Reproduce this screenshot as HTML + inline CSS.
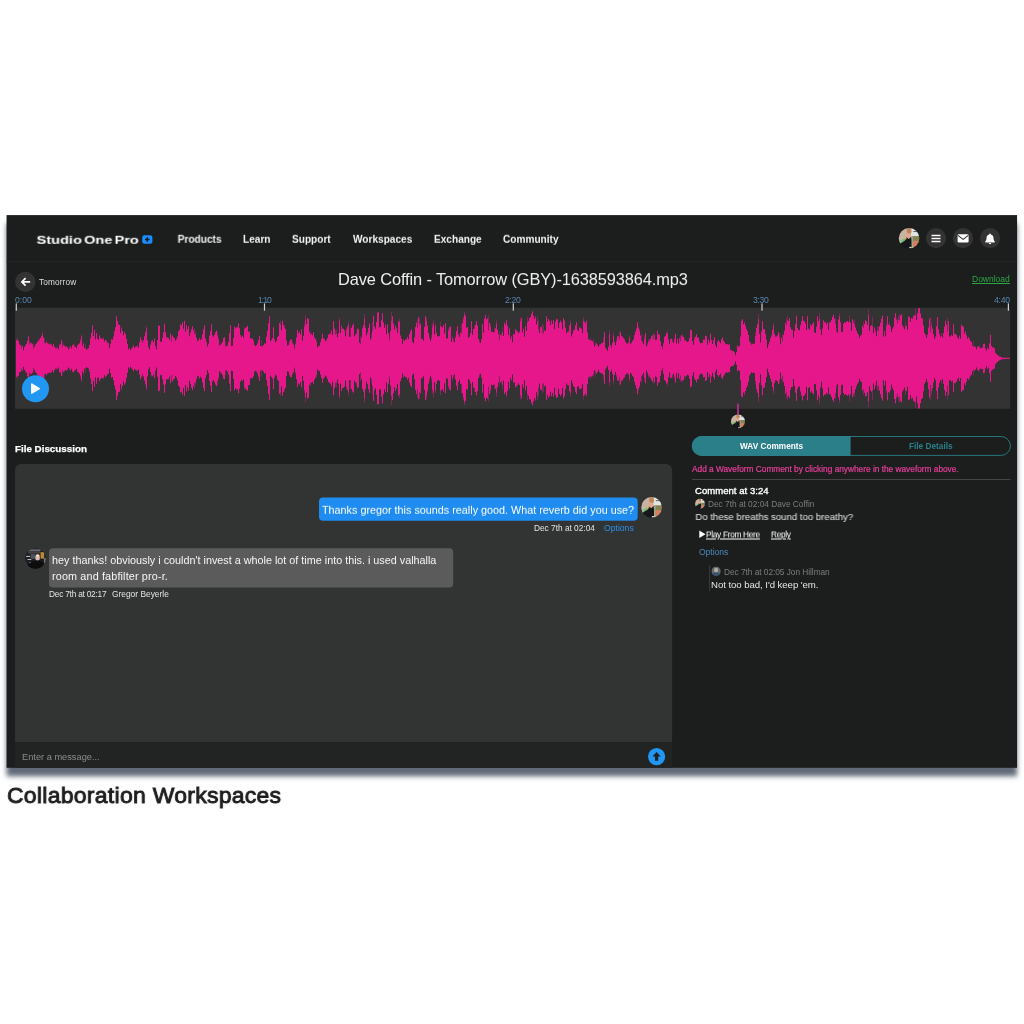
<!DOCTYPE html>
<html lang="en">
<head>
<meta charset="utf-8">
<title>Collaboration Workspaces</title>
<style>
html,body{margin:0;padding:0;background:#fff;}
body{width:1024px;height:1024px;position:relative;overflow:hidden;font-family:"Liberation Sans",sans-serif;}
#bg{position:absolute;left:0;top:0;}
.t{position:absolute;left:0;top:0;will-change:transform;white-space:nowrap;line-height:1;color:#fff;transform-origin:0 0;transform:translate(var(--x),var(--y)) rotate(.01deg);}
.b{font-weight:bold;}
.nav{font-size:10.1px;font-weight:bold;color:#f2f2f2;--y:234.800px;}
.tl{font-size:8.6px;color:#5585ad;--y:296px;}
.meta{font-size:8.3px;color:#7b7b7b;}
.u{text-decoration:underline;}
</style>
</head>
<body>
<svg id="bg" width="1024" height="1024" viewBox="0 0 1024 1024">
<defs>
<filter id="sh" x="-5%" y="-10%" width="110%" height="120%"><feGaussianBlur stdDeviation="2.8"/></filter>
<clipPath id="c1"><circle cx="10.3" cy="10.3" r="10.3"/></clipPath>
<clipPath id="c2"><circle cx="7" cy="7" r="7"/></clipPath>
<filter id="bl" x="-10%" y="-10%" width="120%" height="120%"><feGaussianBlur stdDeviation="0.45"/></filter>
<g id="avA"><g clip-path="url(#c1)"><g filter="url(#bl)"><rect x="-2" y="-2" width="25" height="25" fill="#c9b3a2"/><rect x="12.3" y="-1" width="10" height="10.5" fill="#e0e5e3"/><rect x="14.5" y="3.200" width="7" height=".8" fill="#5a3a2a"/><rect x="13" y="8.200" width="9" height="5.500" fill="#86834f"/><rect x="11.800" y="8.500" width="2.600" height="6.500" fill="#a39a98"/><ellipse cx="16.600" cy="16.200" rx="3" ry="3.600" fill="#d67e5e"/><ellipse cx="10.300" cy="3" rx="2.400" ry="2.900" fill="#c4845a"/><ellipse cx="9.500" cy="8" rx="2.300" ry="2.700" fill="#e2a88e"/><path d="M1 15.500L2.800 11.800 6.200 10.400 6.500 15.500zM10.600 10.300L13.300 11 13.600 18.500 11.200 18.500z" fill="#6ec07c"/><path d="M1 22V16L4 14 6.300 12.600 7.600 9.300 10 11.200 12.200 9 12.700 12.500V22z" fill="#15181a"/><ellipse cx="6.800" cy="10.700" rx="1.200" ry=".8" fill="#cdb84e"/><rect x="10.500" y="19" width="2.200" height="1.400" fill="#ddd"/></g></g></g>
<g id="avG"><g clip-path="url(#c1)"><g filter="url(#bl)"><rect x="-2" y="-2" width="25" height="25" fill="#1f1d24"/><rect x="4" y="1" width="11.500" height="1.800" fill="#67627a"/><rect x="3" y="2.800" width="12" height="2.600" fill="#46403f"/><rect x="5.600" y="5.800" width="4.600" height="4.800" fill="#4a545e"/><rect x="1" y="7.600" width="4" height="1" fill="#c8c8cd"/><rect x="2.300" y="10.700" width="3.800" height="1" fill="#b9b5ba"/><rect x="4.300" y="13.700" width="1.800" height=".8" fill="#99969c"/><rect x="15.400" y="3.800" width="3.600" height="6.500" fill="#b98a34"/><rect x="19" y="9.900" width="1.900" height="5.400" fill="#85858f"/><ellipse cx="12.500" cy="6.700" rx="2.500" ry="1.600" fill="#3e2b26"/><ellipse cx="12.450" cy="9.200" rx="2.250" ry="3.200" fill="#dfbcae"/><ellipse cx="12.450" cy="7.300" rx="1.300" ry=".9" fill="#fff0e8"/><path d="M2 22V17L6.500 13.500 10.500 12.300H14.500L18.500 14.500 20 22z" fill="#0b0b10"/></g></g></g>
<g id="avS"><g transform="scale(.6796)"><use href="#avA"/></g></g>
</defs>
<!-- frame + shadow -->
<rect x="6.55" y="223.6" width="1010.5" height="552.7" fill="#606b78" filter="url(#sh)"/>
<rect x="6.55" y="215.1" width="1010.5" height="552.7" fill="#1c1d1d"/>
<rect x="6.55" y="261.3" width="1010.5" height="1" fill="#272828"/>

<!-- logo plus -->
<rect x="142.2" y="235.2" width="10.2" height="8.6" rx="2.2" fill="#1a8cff"/>
<path d="M147.300 237.200v4.600M145 239.500h4.600" stroke="#1c1d1d" stroke-width="1.600"/>

<!-- nav right icons -->
<use href="#avA" x="898.8" y="227.900"/>
<circle cx="936" cy="238.200" r="10.1" fill="#333"/>
<path d="M931.500 235.400h9M931.500 238.500h9M931.500 241.600h9" stroke="#fff" stroke-width="1.500"/>
<circle cx="963" cy="238.200" r="10.1" fill="#333"/>
<rect x="957.6" y="234.200" width="11" height="8.400" rx="1.300" fill="#fff"/>
<path d="M957.900 235.400l5.200 4 5.200-4" stroke="#333" stroke-width="1.100" fill="none"/>
<circle cx="990" cy="238.200" r="10.1" fill="#333"/>
<path transform="translate(984.5 232.900)" d="M5.500.6c-.5 0-.8.300-.8.800v.3C3 2.100 2 3.500 2 5.200c0 2-.6 2.800-1.300 3.500-.3.300-.1.900.4.900h8.800c.5 0 .7-.6.400-.9C9.600 8 9 7.200 9 5.200 9 3.500 8 2.100 6.300 1.700v-.3c0-.5-.3-.8-.8-.8zM4.300 10.200c0 .7.500 1.200 1.200 1.200s1.200-.5 1.200-1.200z" fill="#fff"/>

<!-- back button -->
<circle cx="25.250" cy="281.900" r="10.200" fill="#333"/>
<path d="M30.200 281.900h-8M25.600 278.200l-3.700 3.700 3.700 3.700" stroke="#fff" stroke-width="1.700" fill="none"/>

<!-- waveform -->
<rect x="15.050" y="307.700" width="995.050" height="101.100" fill="#333"/>
<g transform="translate(15.5 307.750)"><path fill="#e6178a" fill-opacity=".5" d="M1.6,30.3h.8V71.0h-.8zM5.6,37.2h.8V64.1h-.8zM9.6,36.4h.8V64.9h-.8zM13.6,33.3h.8V68.0h-.8zM17.6,35.5h.8V65.8h-.8zM22.6,29.9h.8V71.4h-.8zM26.6,23.5h.8V77.8h-.8zM28.6,30.5h.8V70.8h-.8zM33.6,35.2h.8V66.1h-.8zM40.6,38.7h.8V62.6h-.8zM46.6,33.9h.8V67.4h-.8zM53.6,38.8h.8V62.5h-.8zM58.6,37.0h.8V64.3h-.8zM64.6,31.2h.8V70.1h-.8zM65.6,26.9h.8V74.4h-.8zM67.6,33.7h.8V67.6h-.8zM69.6,36.0h.8V65.3h-.8zM87.6,29.5h.8V71.8h-.8zM105.6,18.3h.8V83.0h-.8zM126.6,33.0h.8V68.3h-.8zM130.6,18.5h.8V82.8h-.8zM135.6,32.2h.8V69.1h-.8zM155.6,28.1h.8V73.2h-.8zM178.6,20.6h.8V80.7h-.8zM179.6,23.6h.8V77.7h-.8zM201.6,23.7h.8V77.6h-.8zM202.6,29.9h.8V71.4h-.8zM204.6,35.2h.8V66.1h-.8zM209.6,34.0h.8V67.3h-.8zM228.6,19.2h.8V82.1h-.8zM245.6,32.6h.8V68.7h-.8zM264.6,12.8h.8V88.5h-.8zM268.6,17.2h.8V84.1h-.8zM276.6,33.8h.8V67.5h-.8zM278.6,39.5h.8V61.8h-.8zM279.6,34.5h.8V66.8h-.8zM288.6,16.0h.8V85.3h-.8zM289.6,6.9h.8V94.4h-.8zM294.6,23.1h.8V78.2h-.8zM300.6,31.3h.8V70.0h-.8zM319.6,22.3h.8V79.0h-.8zM320.6,21.6h.8V79.7h-.8zM323.6,10.1h.8V91.2h-.8zM330.6,19.9h.8V81.4h-.8zM332.6,13.4h.8V87.9h-.8zM334.6,19.9h.8V81.4h-.8zM337.6,15.0h.8V86.3h-.8zM340.6,23.4h.8V77.9h-.8zM344.6,28.1h.8V73.2h-.8zM348.6,6.4h.8V94.9h-.8zM355.6,25.5h.8V75.8h-.8zM356.6,14.2h.8V87.1h-.8zM373.6,29.2h.8V72.1h-.8zM375.6,4.1h.8V97.2h-.8zM383.6,11.1h.8V90.2h-.8zM401.6,11.4h.8V89.9h-.8zM403.6,10.1h.8V91.2h-.8zM410.6,9.7h.8V91.6h-.8zM413.6,28.0h.8V73.3h-.8zM415.6,27.4h.8V73.9h-.8zM416.6,15.6h.8V85.7h-.8zM417.6,11.5h.8V89.8h-.8zM419.6,15.9h.8V85.4h-.8zM424.6,13.9h.8V87.4h-.8zM432.6,21.0h.8V80.3h-.8zM436.6,28.2h.8V73.1h-.8zM437.6,30.9h.8V70.4h-.8zM445.6,15.9h.8V85.4h-.8zM447.6,8.9h.8V92.4h-.8zM448.6,3.7h.8V97.6h-.8zM458.6,17.7h.8V83.6h-.8zM463.6,32.2h.8V69.1h-.8zM472.6,7.6h.8V93.7h-.8zM474.6,16.0h.8V85.3h-.8zM478.6,19.8h.8V81.5h-.8zM480.6,12.4h.8V88.9h-.8zM483.6,23.6h.8V77.7h-.8zM485.6,25.4h.8V75.9h-.8zM486.6,19.3h.8V82.0h-.8zM500.6,21.4h.8V79.9h-.8zM504.6,9.6h.8V91.7h-.8zM511.6,9.0h.8V92.3h-.8zM519.6,8.0h.8V93.3h-.8zM521.6,8.9h.8V92.4h-.8zM522.6,12.4h.8V88.9h-.8zM526.6,16.2h.8V85.1h-.8zM527.6,17.4h.8V83.9h-.8zM554.6,12.2h.8V89.1h-.8zM567.6,9.6h.8V91.7h-.8zM574.6,29.6h.8V71.7h-.8zM577.6,31.2h.8V70.1h-.8zM579.6,33.8h.8V67.5h-.8zM587.6,29.3h.8V72.0h-.8zM593.6,22.6h.8V78.7h-.8zM595.6,37.7h.8V63.6h-.8zM597.6,24.5h.8V76.8h-.8zM600.6,31.9h.8V69.4h-.8zM603.6,23.4h.8V77.9h-.8zM613.6,27.3h.8V74.0h-.8zM622.6,18.4h.8V82.9h-.8zM623.6,21.3h.8V80.0h-.8zM625.6,25.7h.8V75.6h-.8zM628.6,27.8h.8V73.5h-.8zM631.6,35.0h.8V66.3h-.8zM632.6,31.4h.8V69.9h-.8zM633.6,30.9h.8V70.4h-.8zM637.6,25.3h.8V76.0h-.8zM643.6,26.0h.8V75.3h-.8zM646.6,38.7h.8V62.6h-.8zM651.6,22.8h.8V78.5h-.8zM656.6,31.3h.8V70.0h-.8zM658.6,29.7h.8V71.6h-.8zM664.6,27.7h.8V73.6h-.8zM666.6,26.8h.8V74.5h-.8zM668.6,30.2h.8V71.1h-.8zM678.6,29.1h.8V72.2h-.8zM728.6,13.9h.8V87.4h-.8zM739.6,24.8h.8V76.5h-.8zM742.6,6.7h.8V94.6h-.8zM757.6,15.3h.8V86.0h-.8zM763.6,25.4h.8V75.9h-.8zM766.6,26.0h.8V75.3h-.8zM770.6,10.8h.8V90.5h-.8zM771.6,8.6h.8V92.7h-.8zM803.6,4.9h.8V96.4h-.8zM819.6,10.4h.8V90.9h-.8zM820.6,20.2h.8V81.1h-.8zM823.6,5.5h.8V95.8h-.8zM833.6,7.7h.8V93.6h-.8zM837.6,13.0h.8V88.3h-.8zM838.6,12.1h.8V89.2h-.8zM847.6,14.1h.8V87.2h-.8zM852.6,1.4h.8V99.9h-.8zM856.6,8.9h.8V92.4h-.8zM861.6,19.0h.8V82.3h-.8zM862.6,18.3h.8V83.0h-.8zM870.6,16.2h.8V85.1h-.8zM873.6,14.3h.8V87.0h-.8zM880.6,9.8h.8V91.5h-.8zM881.6,11.6h.8V89.7h-.8zM882.6,8.3h.8V93.0h-.8zM883.6,6.4h.8V94.9h-.8zM889.6,14.1h.8V87.2h-.8zM899.6,1.1h.8V100.2h-.8zM914.6,8.9h.8V92.4h-.8zM915.6,13.6h.8V87.7h-.8zM925.6,25.3h.8V76.0h-.8zM931.6,9.9h.8V91.4h-.8zM957.6,33.1h.8V68.2h-.8zM963.6,37.8h.8V63.5h-.8z"/><path fill="#e6178a" d="M0.5,50.65V31.9h1V33.1h1V33.2h1V36.7h1V37.4h1V40.6h1V38.2h1V42.4h1V39.2h1V38.0h1V36.3h1V32.9h1V28.6h1V37.0h1V35.1h1V35.4h1V36.6h1V41.1h1V39.2h1V36.8h1V35.7h1V34.0h1V33.5h1V31.9h1V30.3h1V28.2h1V26.6h1V29.4h1V35.0h1V35.4h1V33.8h1V35.6h1V36.1h1V37.1h1V36.4h1V36.8h1V38.8h1V36.1h1V38.8h1V40.5h1V41.0h1V40.1h1V41.5h1V36.9h1V36.6h1V32.6h1V39.3h1V37.0h1V37.8h1V39.0h1V38.6h1V39.6h1V41.6h1V40.8h1V38.6h1V40.4h1V37.4h1V36.6h1V38.9h1V39.0h1V40.4h1V37.4h1V36.6h1V35.4h1V33.3h1V28.6h1V37.9h1V36.1h1V40.2h1V40.7h1V42.0h1V41.1h1V40.6h1V37.3h1V30.5h1V25.1h1V17.6h1V28.2h1V22.2h1V31.8h1V25.3h1V31.1h1V31.9h1V27.7h1V30.0h1V31.1h1V30.7h1V31.6h1V33.8h1V32.0h1V33.0h1V34.9h1V35.3h1V40.2h1V36.0h1V31.4h1V32.0h1V28.8h1V23.5h1V19.6h1V8.6h1V13.3h1V16.8h1V17.2h1V24.9h1V20.6h1V23.3h1V27.6h1V24.2h1V26.2h1V31.1h1V36.3h1V41.8h1V40.2h1V42.3h1V40.8h1V39.5h1V37.6h1V40.3h1V39.1h1V38.8h1V38.1h1V39.9h1V34.6h1V29.6h1V32.3h1V35.3h1V32.6h1V28.6h1V24.6h1V20.6h1V32.7h1V39.5h1V41.8h1V37.0h1V33.8h1V32.6h1V34.3h1V30.7h1V38.2h1V41.5h1V32.2h1V17.8h1V18.1h1V33.8h1V34.3h1V29.9h1V24.6h1V16.1h1V24.5h1V29.6h1V29.7h1V29.9h1V32.2h1V25.6h1V34.0h1V27.5h1V29.6h1V30.5h1V33.1h1V31.6h1V28.7h1V23.6h1V22.0h1V16.5h1V17.4h1V14.6h1V21.1h1V13.1h1V24.0h1V17.6h1V21.7h1V18.6h1V28.4h1V25.0h1V21.4h1V18.6h1V22.5h1V26.0h1V26.7h1V29.9h1V33.2h1V32.5h1V30.6h1V32.2h1V30.9h1V26.5h1V21.4h1V17.6h1V30.7h1V34.0h1V38.7h1V36.0h1V28.0h1V23.3h1V16.6h1V27.5h1V29.0h1V27.0h1V24.6h1V22.8h1V27.8h1V31.8h1V37.8h1V37.2h1V35.9h1V33.9h1V30.3h1V29.6h1V39.1h1V38.6h1V37.4h1V34.2h1V25.4h1V17.6h1V38.2h1V38.1h1V30.2h1V18.8h1V20.7h1V19.5h1V19.6h1V15.6h1V20.6h1V27.3h1V29.0h1V28.1h1V29.9h1V21.7h1V20.2h1V19.2h1V18.1h1V23.8h1V24.0h1V30.8h1V30.8h1V30.7h1V32.7h1V37.2h1V38.4h1V37.5h1V35.5h1V32.2h1V28.1h1V38.2h1V38.5h1V38.7h1V37.2h1V35.4h1V36.0h1V29.0h1V23.0h1V15.4h1V8.6h1V33.4h1V31.9h1V30.2h1V19.6h1V31.6h1V34.4h1V33.3h1V29.2h1V28.0h1V15.2h1V16.4h1V22.5h1V13.1h1V17.3h1V19.7h1V21.3h1V32.7h1V37.7h1V37.3h1V33.8h1V32.1h1V31.6h1V35.4h1V36.8h1V41.5h1V36.5h1V29.8h1V22.2h1V25.6h1V24.2h1V26.8h1V21.6h1V33.1h1V28.1h1V19.0h1V11.8h1V16.6h1V10.6h1V11.1h1V24.2h1V26.8h1V26.2h1V27.4h1V24.6h1V29.6h1V31.5h1V34.2h1V39.5h1V38.3h1V38.1h1V34.5h1V31.0h1V26.1h1V30.5h1V31.5h1V33.6h1V32.3h1V29.9h1V26.7h1V26.5h1V25.4h1V22.8h1V27.3h1V13.6h1V20.7h1V26.4h1V26.3h1V29.6h1V25.3h1V12.6h1V25.6h1V18.1h1V21.1h1V21.0h1V22.6h1V28.6h1V22.2h1V18.8h1V16.6h1V28.9h1V29.0h1V20.0h1V17.6h1V16.6h1V28.6h1V26.6h1V26.3h1V20.7h1V21.6h1V35.1h1V36.6h1V29.8h1V20.4h1V17.2h1V10.6h1V20.1h1V27.4h1V24.8h1V19.9h1V16.1h1V31.9h1V30.1h1V23.0h1V8.1h1V18.8h1V20.9h1V14.3h1V4.8h1V4.6h1V19.8h1V19.2h1V12.5h1V5.6h1V14.8h1V19.9h1V16.9h1V26.6h1V16.6h1V25.2h1V32.6h1V23.4h1V13.1h1V8.6h1V15.8h1V21.7h1V18.0h1V20.5h1V25.0h1V13.4h1V14.6h1V27.7h1V30.9h1V35.9h1V31.7h1V33.3h1V31.7h1V31.6h1V29.2h1V31.4h1V26.3h1V23.4h1V21.6h1V34.1h1V35.6h1V29.7h1V19.3h1V15.1h1V20.0h1V9.6h1V17.0h1V15.9h1V30.9h1V31.2h1V32.9h1V19.2h1V8.6h1V13.6h1V17.9h1V25.3h1V30.6h1V33.3h1V30.9h1V19.6h1V16.6h1V26.7h1V18.1h1V25.2h1V28.6h1V28.7h1V28.2h1V18.4h1V18.9h1V19.7h1V17.2h1V25.7h1V15.6h1V30.8h1V30.4h1V22.8h1V19.6h1V18.6h1V34.1h1V30.5h1V33.7h1V34.6h1V29.6h1V23.2h1V18.6h1V26.8h1V29.2h1V24.7h1V25.4h1V15.5h1V11.3h1V6.5h1V8.1h1V20.1h1V19.3h1V30.0h1V28.9h1V25.5h1V13.6h1V27.0h1V21.3h1V21.0h1V17.0h1V13.6h1V17.8h1V31.0h1V34.7h1V35.2h1V31.5h1V16.2h1V24.9h1V11.0h1V7.6h1V11.5h1V10.4h1V22.6h1V15.0h1V19.0h1V24.3h1V23.9h1V24.4h1V24.5h1V20.4h1V16.1h1V21.9h1V26.6h1V32.7h1V26.9h1V27.8h1V24.2h1V28.3h1V15.0h1V16.7h1V12.6h1V18.0h1V27.2h1V20.6h1V31.1h1V28.5h1V34.5h1V26.2h1V26.7h1V21.6h1V23.8h1V23.6h1V25.6h1V24.1h1V13.7h1V10.6h1V24.6h1V21.1h1V28.9h1V18.5h1V23.0h1V14.8h1V13.3h1V9.9h1V9.6h1V6.1h1V3.6h1V7.9h1V11.1h1V9.5h1V16.8h1V13.7h1V21.7h1V25.3h1V19.5h1V18.9h1V24.9h1V25.8h1V22.5h1V23.2h1V8.6h1V14.0h1V11.2h1V12.9h1V17.4h1V12.7h1V16.2h1V12.2h1V21.4h1V14.0h1V11.1h1V11.8h1V20.3h1V15.0h1V13.1h1V14.7h1V21.4h1V10.6h1V12.8h1V20.0h1V25.5h1V24.0h1V23.7h1V17.7h1V15.6h1V28.7h1V25.9h1V22.8h1V21.9h1V17.4h1V14.6h1V22.3h1V23.1h1V19.7h1V20.1h1V21.0h1V25.4h1V13.1h1V13.8h1V15.6h1V13.1h1V24.7h1V31.2h1V32.2h1V33.2h1V32.4h1V33.2h1V35.5h1V38.7h1V37.6h1V35.4h1V37.0h1V39.2h1V36.9h1V36.4h1V35.6h1V35.3h1V34.1h1V24.6h1V39.8h1V41.5h1V43.0h1V39.0h1V26.6h1V37.3h1V39.9h1V35.1h1V28.1h1V34.0h1V37.4h1V33.8h1V28.5h1V28.6h1V31.8h1V24.6h1V28.1h1V28.7h1V30.6h1V31.6h1V34.0h1V35.6h1V35.9h1V34.5h1V29.6h1V36.4h1V35.0h1V33.2h1V31.7h1V27.3h1V24.1h1V20.7h1V14.6h1V20.2h1V23.1h1V27.7h1V32.8h1V34.0h1V36.4h1V31.3h1V25.6h1V38.5h1V36.9h1V33.5h1V33.6h1V31.2h1V28.5h1V27.6h1V31.3h1V26.8h1V32.5h1V32.1h1V23.1h1V26.5h1V27.5h1V33.4h1V38.3h1V41.4h1V35.4h1V29.0h1V28.1h1V25.3h1V26.1h1V31.7h1V36.5h1V31.1h1V31.1h1V34.1h1V35.3h1V32.4h1V26.1h1V35.8h1V31.0h1V35.7h1V30.4h1V33.6h1V27.6h1V29.1h1V29.1h1V33.2h1V32.3h1V33.4h1V34.2h1V33.5h1V30.2h1V21.9h1V22.6h1V33.2h1V36.9h1V31.0h1V29.0h1V26.6h1V29.7h1V30.1h1V33.7h1V35.6h1V35.3h1V34.9h1V31.8h1V32.1h1V28.1h1V28.6h1V37.0h1V31.7h1V34.8h1V26.1h1V32.5h1V36.2h1V32.2h1V29.6h1V37.2h1V39.5h1V34.1h1V32.2h1V34.1h1V35.6h1V31.5h1V29.6h1V32.7h1V34.2h1V36.1h1V36.7h1V36.2h1V36.9h1V36.6h1V42.0h1V42.8h1V43.0h1V43.4h1V44.6h1V47.5h1V44.2h1V37.8h1V39.0h1V38.3h1V28.8h1V12.9h1V11.6h1V16.6h1V15.5h1V18.0h1V21.2h1V23.5h1V27.2h1V33.5h1V35.1h1V36.8h1V36.0h1V36.6h1V35.8h1V28.2h1V19.9h1V16.4h1V11.6h1V26.1h1V34.7h1V23.8h1V13.6h1V21.3h1V21.6h1V26.3h1V32.0h1V40.2h1V36.8h1V33.9h1V30.5h1V27.4h1V22.1h1V18.1h1V26.0h1V28.7h1V28.7h1V27.6h1V24.6h1V29.4h1V36.5h1V30.1h1V33.4h1V27.3h1V23.0h1V15.3h1V17.6h1V12.4h1V13.2h1V10.6h1V19.4h1V22.1h1V22.0h1V30.0h1V23.3h1V16.2h1V8.1h1V20.2h1V22.2h1V22.6h1V17.6h1V13.6h1V8.6h1V12.9h1V13.6h1V15.5h1V22.3h1V8.6h1V20.7h1V22.0h1V16.5h1V18.1h1V16.0h1V14.6h1V24.8h1V25.2h1V18.9h1V8.6h1V13.5h1V11.0h1V21.5h1V27.3h1V20.8h1V12.6h1V14.6h1V14.4h1V16.4h1V14.8h1V21.9h1V14.7h1V14.6h1V12.0h1V9.2h1V7.1h1V10.9h1V15.9h1V24.0h1V24.9h1V11.8h1V8.6h1V14.4h1V23.9h1V24.6h1V16.1h1V14.4h1V14.7h1V14.0h1V13.3h1V14.5h1V13.2h1V14.7h1V23.1h1V11.6h1V15.6h1V16.2h1V19.7h1V22.8h1V25.2h1V26.8h1V30.2h1V28.0h1V27.0h1V18.2h1V20.0h1V16.2h1V12.6h1V13.4h1V16.9h1V7.6h1V22.9h1V18.6h1V17.4h1V18.6h1V25.5h1V19.7h1V23.5h1V28.4h1V22.5h1V23.6h1V18.6h1V14.9h1V11.1h1V8.1h1V28.8h1V23.3h1V28.4h1V18.3h1V8.6h1V16.8h1V16.8h1V18.7h1V24.2h1V21.1h1V18.9h1V10.0h1V5.6h1V12.5h1V15.9h1V12.0h1V12.5h1V7.8h1V6.6h1V17.6h1V19.4h1V21.5h1V18.4h1V18.0h1V22.3h1V8.6h1V9.6h1V13.9h1V10.3h1V11.0h1V8.2h1V7.4h1V7.4h1V12.5h1V5.5h1V0.2h1V0.6h1V5.7h1V9.9h1V11.0h1V17.8h1V25.2h1V27.0h1V30.1h1V26.7h1V19.8h1V11.1h1V24.4h1V17.7h1V21.0h1V26.5h1V31.1h1V28.7h1V18.4h1V9.6h1V21.6h1V26.2h1V29.1h1V28.2h1V29.7h1V25.3h1V19.1h1V13.1h1V17.0h1V23.7h1V13.6h1V28.7h1V28.7h1V27.2h1V28.2h1V16.6h1V26.1h1V25.9h1V27.2h1V29.7h1V31.3h1V28.0h1V31.1h1V17.1h1V18.2h1V19.1h1V25.8h1V23.8h1V27.4h1V30.9h1V29.2h1V30.9h1V33.2h1V34.3h1V37.9h1V39.3h1V38.5h1V39.3h1V41.5h1V38.9h1V38.4h1V40.0h1V40.5h1V40.0h1V40.1h1V35.9h1V36.1h1V40.9h1V42.9h1V40.0h1V41.3h1V35.7h1V27.1h1V38.2h1V39.5h1V39.7h1V40.5h1V44.9h1V46.3h1V47.1h1V48.0h1V48.7h1V49.1h1V49.5h1V50.0h1V49.9h1V50.0h1V50.1h1V50.1h1V50.1h1V50.1h1V50.1h1V50.65V51.1h-1V51.2h-1V51.1h-1V51.2h-1V51.2h-1V51.3h-1V51.4h-1V51.3h-1V51.8h-1V52.2h-1V52.6h-1V53.3h-1V54.2h-1V55.0h-1V56.4h-1V60.8h-1V61.6h-1V61.8h-1V63.1h-1V74.1h-1V65.6h-1V60.0h-1V61.3h-1V58.4h-1V60.4h-1V65.1h-1V65.4h-1V61.2h-1V61.3h-1V60.8h-1V61.3h-1V62.9h-1V62.4h-1V59.8h-1V62.0h-1V62.8h-1V62.0h-1V63.4h-1V67.0h-1V68.1h-1V70.4h-1V72.1h-1V70.4h-1V73.9h-1V77.5h-1V75.5h-1V82.2h-1V83.1h-1V84.1h-1V70.2h-1V73.3h-1V70.0h-1V71.6h-1V74.1h-1V75.4h-1V75.2h-1V84.6h-1V73.1h-1V74.1h-1V72.6h-1V72.6h-1V87.6h-1V77.6h-1V84.3h-1V88.2h-1V82.2h-1V76.0h-1V71.6h-1V73.1h-1V72.2h-1V75.1h-1V79.7h-1V91.6h-1V82.9h-1V72.6h-1V70.2h-1V74.8h-1V80.3h-1V83.6h-1V76.9h-1V90.1h-1V81.5h-1V74.6h-1V71.2h-1V74.3h-1V76.1h-1V83.5h-1V90.3h-1V91.4h-1V95.6h-1V100.6h-1V101.1h-1V95.8h-1V88.8h-1V93.9h-1V93.9h-1V93.1h-1V90.3h-1V91.0h-1V87.4h-1V91.7h-1V92.6h-1V79.0h-1V83.3h-1V82.9h-1V79.8h-1V81.9h-1V83.7h-1V94.6h-1V93.5h-1V88.8h-1V89.3h-1V85.4h-1V88.8h-1V95.6h-1V91.3h-1V82.4h-1V80.2h-1V77.1h-1V82.6h-1V84.5h-1V84.5h-1V92.6h-1V83.0h-1V72.9h-1V78.0h-1V72.5h-1V93.1h-1V90.2h-1V86.4h-1V82.7h-1V77.7h-1V78.8h-1V72.9h-1V77.8h-1V81.6h-1V75.8h-1V82.7h-1V83.9h-1V82.7h-1V78.4h-1V93.6h-1V84.4h-1V87.9h-1V88.7h-1V85.1h-1V81.3h-1V83.1h-1V74.3h-1V73.3h-1V71.1h-1V74.5h-1V76.1h-1V78.5h-1V81.6h-1V85.1h-1V85.7h-1V89.6h-1V78.2h-1V86.6h-1V88.1h-1V86.8h-1V88.0h-1V87.3h-1V86.6h-1V86.9h-1V85.2h-1V76.7h-1V77.4h-1V86.9h-1V92.6h-1V89.5h-1V76.4h-1V77.3h-1V85.4h-1V90.4h-1V94.1h-1V92.1h-1V89.3h-1V86.7h-1V86.6h-1V79.4h-1V86.5h-1V84.9h-1V86.9h-1V86.7h-1V88.6h-1V80.5h-1V74.0h-1V79.8h-1V90.3h-1V87.8h-1V92.6h-1V82.4h-1V76.1h-1V76.5h-1V86.6h-1V85.3h-1V83.2h-1V84.8h-1V79.3h-1V80.6h-1V92.6h-1V79.0h-1V85.8h-1V87.7h-1V88.4h-1V92.6h-1V87.7h-1V83.7h-1V78.7h-1V79.1h-1V81.1h-1V93.1h-1V85.1h-1V78.0h-1V71.3h-1V79.3h-1V79.2h-1V81.9h-1V90.6h-1V88.1h-1V88.9h-1V83.7h-1V86.0h-1V78.3h-1V74.0h-1V67.9h-1V71.2h-1V64.8h-1V71.9h-1V76.6h-1V73.7h-1V72.6h-1V72.6h-1V75.3h-1V83.1h-1V79.2h-1V73.9h-1V70.8h-1V67.4h-1V64.5h-1V61.1h-1V69.3h-1V75.0h-1V79.7h-1V80.0h-1V87.6h-1V77.5h-1V66.6h-1V75.2h-1V89.6h-1V84.9h-1V81.4h-1V73.1h-1V65.5h-1V64.7h-1V65.3h-1V64.5h-1V66.2h-1V67.8h-1V74.1h-1V77.8h-1V80.1h-1V83.3h-1V85.8h-1V84.7h-1V89.6h-1V88.4h-1V72.5h-1V63.0h-1V62.3h-1V63.5h-1V57.1h-1V53.8h-1V56.6h-1V57.9h-1V58.3h-1V58.5h-1V59.3h-1V64.6h-1V64.4h-1V65.1h-1V64.6h-1V65.2h-1V67.1h-1V68.6h-1V71.6h-1V69.8h-1V65.7h-1V67.2h-1V69.1h-1V67.2h-1V61.8h-1V64.1h-1V71.6h-1V69.1h-1V65.1h-1V68.8h-1V75.1h-1V66.5h-1V69.6h-1V64.3h-1V72.6h-1V73.2h-1V69.2h-1V69.5h-1V66.4h-1V66.0h-1V65.7h-1V67.6h-1V71.2h-1V71.6h-1V74.6h-1V72.3h-1V70.3h-1V64.4h-1V68.1h-1V78.6h-1V79.4h-1V71.1h-1V67.8h-1V67.1h-1V67.9h-1V69.0h-1V68.1h-1V72.2h-1V72.2h-1V73.6h-1V67.7h-1V70.9h-1V65.6h-1V70.3h-1V65.5h-1V75.1h-1V68.9h-1V66.0h-1V67.2h-1V70.1h-1V70.2h-1V64.8h-1V69.6h-1V75.1h-1V76.0h-1V73.2h-1V72.3h-1V65.9h-1V59.9h-1V63.0h-1V67.9h-1V73.8h-1V74.8h-1V78.1h-1V69.2h-1V68.8h-1V74.5h-1V70.0h-1V73.7h-1V72.8h-1V70.1h-1V67.7h-1V67.8h-1V64.4h-1V62.8h-1V75.6h-1V70.0h-1V64.9h-1V67.3h-1V68.5h-1V73.6h-1V78.2h-1V81.1h-1V86.6h-1V80.6h-1V77.2h-1V74.0h-1V69.6h-1V68.1h-1V66.3h-1V64.9h-1V71.6h-1V66.8h-1V65.4h-1V65.7h-1V67.3h-1V69.7h-1V70.7h-1V72.6h-1V73.2h-1V76.6h-1V69.5h-1V72.7h-1V72.8h-1V67.5h-1V63.9h-1V67.3h-1V73.1h-1V66.2h-1V61.4h-1V64.0h-1V74.6h-1V62.3h-1V58.3h-1V59.8h-1V61.5h-1V76.6h-1V67.2h-1V66.0h-1V65.7h-1V64.9h-1V64.4h-1V62.1h-1V64.3h-1V65.9h-1V63.7h-1V62.6h-1V65.8h-1V68.1h-1V68.9h-1V68.1h-1V69.1h-1V70.1h-1V76.6h-1V88.1h-1V85.7h-1V87.5h-1V88.1h-1V75.9h-1V80.3h-1V81.2h-1V81.6h-1V78.2h-1V79.0h-1V86.6h-1V83.9h-1V79.4h-1V78.5h-1V75.4h-1V72.6h-1V85.6h-1V83.6h-1V77.6h-1V77.3h-1V75.8h-1V81.3h-1V88.5h-1V90.6h-1V79.9h-1V86.6h-1V88.2h-1V86.3h-1V81.0h-1V89.5h-1V90.1h-1V87.3h-1V79.9h-1V89.1h-1V85.1h-1V88.6h-1V83.9h-1V88.4h-1V90.1h-1V87.3h-1V92.6h-1V78.1h-1V78.8h-1V75.5h-1V76.4h-1V82.4h-1V81.8h-1V76.0h-1V79.6h-1V87.6h-1V84.5h-1V91.8h-1V90.2h-1V93.4h-1V97.6h-1V95.2h-1V91.7h-1V91.4h-1V88.0h-1V86.5h-1V78.3h-1V82.8h-1V72.4h-1V80.2h-1V76.7h-1V90.6h-1V87.6h-1V77.2h-1V75.7h-1V77.7h-1V77.5h-1V79.6h-1V74.6h-1V75.1h-1V66.8h-1V72.8h-1V70.2h-1V80.7h-1V74.1h-1V83.3h-1V88.6h-1V84.6h-1V86.3h-1V73.0h-1V77.1h-1V73.5h-1V74.4h-1V68.6h-1V74.7h-1V79.4h-1V85.1h-1V80.9h-1V76.8h-1V76.9h-1V77.4h-1V77.0h-1V82.3h-1V86.3h-1V78.7h-1V90.9h-1V89.8h-1V93.6h-1V90.3h-1V76.4h-1V85.1h-1V69.8h-1V66.1h-1V66.6h-1V70.3h-1V83.5h-1V87.6h-1V84.3h-1V80.3h-1V80.0h-1V74.3h-1V87.6h-1V75.8h-1V72.4h-1V71.3h-1V82.0h-1V81.2h-1V93.1h-1V94.8h-1V90.0h-1V85.8h-1V75.9h-1V76.6h-1V72.1h-1V74.5h-1V82.6h-1V78.1h-1V71.7h-1V66.7h-1V67.6h-1V70.8h-1V67.2h-1V82.6h-1V81.7h-1V78.5h-1V70.9h-1V70.5h-1V85.6h-1V75.6h-1V84.1h-1V81.6h-1V82.4h-1V82.9h-1V73.1h-1V72.6h-1V72.7h-1V76.1h-1V83.2h-1V74.6h-1V84.6h-1V81.7h-1V70.4h-1V68.0h-1V70.7h-1V76.0h-1V83.4h-1V87.7h-1V92.6h-1V82.1h-1V68.4h-1V70.1h-1V70.4h-1V85.4h-1V84.3h-1V91.6h-1V81.3h-1V86.2h-1V82.0h-1V71.6h-1V65.7h-1V67.2h-1V79.6h-1V77.9h-1V75.0h-1V69.9h-1V72.1h-1V69.7h-1V69.6h-1V68.0h-1V69.6h-1V65.4h-1V70.4h-1V73.6h-1V86.6h-1V87.9h-1V76.3h-1V80.8h-1V83.3h-1V79.6h-1V85.5h-1V92.6h-1V88.2h-1V77.9h-1V68.7h-1V76.1h-1V84.6h-1V74.7h-1V84.4h-1V81.4h-1V86.5h-1V95.6h-1V88.8h-1V82.1h-1V81.5h-1V96.6h-1V96.5h-1V87.0h-1V80.4h-1V82.5h-1V93.1h-1V78.3h-1V71.2h-1V69.4h-1V85.1h-1V81.4h-1V76.5h-1V73.9h-1V81.2h-1V90.6h-1V84.1h-1V80.9h-1V71.5h-1V64.7h-1V66.2h-1V79.6h-1V80.6h-1V75.0h-1V74.7h-1V72.7h-1V84.6h-1V83.7h-1V81.3h-1V72.3h-1V72.4h-1V84.6h-1V82.5h-1V79.1h-1V72.7h-1V78.7h-1V80.3h-1V80.2h-1V83.2h-1V75.7h-1V88.6h-1V76.0h-1V71.7h-1V75.0h-1V74.9h-1V80.6h-1V87.6h-1V74.0h-1V78.5h-1V75.9h-1V74.8h-1V74.6h-1V71.4h-1V69.0h-1V67.7h-1V69.8h-1V70.8h-1V75.1h-1V70.3h-1V66.8h-1V63.2h-1V63.0h-1V61.8h-1V67.1h-1V69.8h-1V71.7h-1V76.6h-1V73.9h-1V75.1h-1V74.5h-1V77.1h-1V90.1h-1V90.7h-1V84.7h-1V89.5h-1V82.3h-1V73.2h-1V68.2h-1V79.6h-1V74.5h-1V77.1h-1V75.7h-1V79.1h-1V71.5h-1V64.8h-1V59.8h-1V64.5h-1V65.9h-1V69.6h-1V69.2h-1V67.5h-1V64.0h-1V63.6h-1V68.6h-1V80.0h-1V81.6h-1V84.0h-1V88.1h-1V78.8h-1V84.9h-1V86.1h-1V73.3h-1V72.1h-1V68.0h-1V66.9h-1V69.7h-1V81.6h-1V71.1h-1V69.4h-1V67.9h-1V92.6h-1V85.9h-1V78.3h-1V72.3h-1V65.3h-1V65.9h-1V64.1h-1V62.6h-1V62.8h-1V63.1h-1V73.1h-1V69.1h-1V65.8h-1V63.8h-1V62.9h-1V64.1h-1V68.6h-1V70.6h-1V70.5h-1V70.5h-1V77.3h-1V77.5h-1V83.1h-1V82.1h-1V81.1h-1V79.6h-1V71.4h-1V73.2h-1V72.3h-1V74.0h-1V80.7h-1V85.6h-1V81.7h-1V81.8h-1V80.6h-1V82.5h-1V71.1h-1V63.2h-1V63.1h-1V83.6h-1V75.9h-1V67.1h-1V63.9h-1V62.7h-1V62.2h-1V71.6h-1V71.0h-1V67.4h-1V65.4h-1V64.1h-1V63.5h-1V69.5h-1V73.5h-1V78.5h-1V76.7h-1V74.3h-1V72.3h-1V73.8h-1V84.6h-1V78.0h-1V73.3h-1V65.3h-1V62.6h-1V67.3h-1V70.6h-1V83.6h-1V79.9h-1V74.8h-1V70.4h-1V69.1h-1V70.7h-1V68.8h-1V68.1h-1V71.4h-1V74.6h-1V75.3h-1V78.8h-1V82.6h-1V79.9h-1V76.3h-1V72.9h-1V82.7h-1V79.6h-1V83.7h-1V77.3h-1V88.1h-1V80.2h-1V86.7h-1V83.9h-1V84.8h-1V79.3h-1V77.7h-1V72.6h-1V69.7h-1V68.2h-1V70.8h-1V71.7h-1V73.8h-1V67.3h-1V75.6h-1V69.1h-1V71.4h-1V71.6h-1V71.7h-1V76.8h-1V85.1h-1V76.7h-1V71.4h-1V67.0h-1V67.5h-1V83.1h-1V83.5h-1V69.1h-1V59.8h-1V63.1h-1V70.6h-1V67.0h-1V68.6h-1V67.5h-1V64.3h-1V59.5h-1V61.8h-1V68.6h-1V80.6h-1V76.7h-1V72.7h-1V68.7h-1V66.0h-1V69.0h-1V71.6h-1V66.7h-1V61.4h-1V63.2h-1V62.5h-1V62.2h-1V61.0h-1V63.6h-1V61.8h-1V60.5h-1V59.0h-1V61.1h-1V59.5h-1V65.0h-1V70.2h-1V75.1h-1V77.1h-1V73.7h-1V78.0h-1V80.7h-1V76.4h-1V84.1h-1V84.5h-1V88.0h-1V92.6h-1V81.7h-1V77.8h-1V72.5h-1V69.3h-1V69.9h-1V65.3h-1V61.1h-1V66.0h-1V66.4h-1V68.3h-1V69.3h-1V67.5h-1V69.7h-1V70.6h-1V70.2h-1V71.3h-1V73.6h-1V69.4h-1V70.2h-1V76.0h-1V69.5h-1V79.1h-1V73.1h-1V83.6h-1V76.2h-1V70.8h-1V64.0h-1V60.7h-1V60.2h-1V59.3h-1V60.6h-1V61.1h-1V65.2h-1V63.4h-1V72.6h-1V68.0h-1V65.9h-1V64.7h-1V63.9h-1V60.9h-1V62.3h-1V62.4h-1V64.6h-1V63.9h-1V60.9h-1V62.7h-1V60.5h-1V59.7h-1V61.7h-1V62.7h-1V62.3h-1V63.5h-1V64.3h-1V62.0h-1V68.6h-1V64.7h-1V64.4h-1V59.8h-1V61.2h-1V60.3h-1V60.8h-1V62.5h-1V65.1h-1V62.5h-1V64.5h-1V64.9h-1V64.2h-1V65.2h-1V65.7h-1V67.5h-1V65.9h-1V66.3h-1V71.9h-1V74.6h-1V73.1h-1V71.0h-1V69.4h-1V67.8h-1V67.3h-1V65.6h-1V64.5h-1V62.1h-1V60.2h-1V64.7h-1V65.9h-1V66.2h-1V64.3h-1V72.6h-1V68.4h-1V65.0h-1V63.3h-1V62.1h-1V58.9h-1V63.1h-1V60.7h-1V63.9h-1V64.6h-1V68.1h-1V68.2h-1V69.4h-1Z"/></g>
<g fill="#cfcfcf"><rect x="15.700" y="303.400" width="1.200" height="7.300"/><rect x="263.900" y="303.400" width="1.200" height="7.300"/><rect x="512.700" y="303.400" width="1.200" height="7.300"/><rect x="761.400" y="303.400" width="1.200" height="7.300"/><rect x="1007.800" y="303.400" width="1.200" height="7.300"/></g>
<circle cx="35.500" cy="388.750" r="13.500" fill="#2196f3"/>
<path transform="translate(30 382.800)" d="M1 1.300v9a.8.800 0 0 0 1.200.7l7.400-4.500a.8.800 0 0 0 0-1.400L2.200.6A.8.800 0 0 0 1 1.300z" fill="#fff"/>
<rect x="737" y="403.600" width="2" height="11" fill="#a62d80"/>
<use href="#avS" x="731" y="414.400"/>

<!-- chat -->
<path d="M15.050 742V470a6 6 0 0 1 6-6H666.100a6 6 0 0 1 6 6V742z" fill="#323434"/>
<rect x="15.050" y="742" width="657.050" height="25.800" fill="#222323"/>
<circle cx="656.600" cy="756.600" r="8.600" fill="#2196f3"/>
<path transform="translate(652.100 751.700)" d="M4.500.2L.3 4.700H2.900V9h3.200V4.700h2.600z" fill="#1f2122"/>
<rect x="319" y="497.500" width="318.700" height="23.300" rx="4" fill="#1e8cf0"/>
<use href="#avA" x="641.300" y="497.100"/>
<use href="#avG" x="25.150" y="548.300"/>
<rect x="49" y="548.300" width="404.200" height="39.300" rx="4" fill="#5b5b5b"/>

<!-- comments -->
<rect x="692.300" y="436.500" width="318.100" height="18.900" rx="9.450" fill="none" stroke="#27757d" stroke-width="1"/>
<path d="M850.600 436H701.750a9.950 9.950 0 0 0 0 19.900H850.600z" fill="#2a7f88"/>
<rect x="692" y="479" width="318.500" height="1" fill="#444"/>
<g transform="translate(695.100 498.800) scale(.7)"><use href="#avS"/></g>
<path d="M699.300 530.500v7.600l6.200-3.800z" fill="#fff"/>
<rect x="709.100" y="565.200" width="1" height="26.200" fill="#3a3a3a"/>
<g transform="translate(711.400 566.500) scale(.6714)"><g clip-path="url(#c2)"><rect width="14" height="14" fill="#5d6b73"/><ellipse cx="7" cy="5.500" rx="3" ry="3.500" fill="#b9a79a"/><path d="M1 14v-3l3-2h6l3 2v3z" fill="#39536b"/></g></g>
</svg>

<!-- nav text -->
<div class="t b" id="logo" style="--x:36.6px;--y:234.8px;font-size:11.8px;word-spacing:-1.5px;transform:translate(var(--x),var(--y)) rotate(.01deg) scaleX(1.234);">Studio One Pro</div>
<div class="t nav" style="--x:177.700px">Products</div>
<div class="t nav" style="--x:243px">Learn</div>
<div class="t nav" style="--x:292px">Support</div>
<div class="t nav" style="--x:353px">Workspaces</div>
<div class="t nav" style="--x:434px">Exchange</div>
<div class="t nav" style="--x:503px">Community</div>

<!-- title row -->
<div class="t" style="--x:39px;--y:278px;font-size:8.3px;letter-spacing:0.1px;color:#dcdcdc">Tomorrow</div>
<div class="t" id="title" style="--x:338px;--y:271px;font-size:16.4px;color:#eee;letter-spacing:-0.115px">Dave Coffin - Tomorrow (GBY)-1638593864.mp3</div>
<div class="t u" style="--x:972px;--y:275px;font-size:8.5px;color:#2ca543">Download</div>

<!-- timeline -->
<div class="t tl" style="--x:15px;letter-spacing:0">0:00</div>
<div class="t tl" style="--x:258px;letter-spacing:-0.95px">1:10</div>
<div class="t tl" style="--x:505px;letter-spacing:-0.35px">2:20</div>
<div class="t tl" style="--x:753px;letter-spacing:-0.3px">3:30</div>
<div class="t tl" style="--x:994px;letter-spacing:-0.2px">4:40</div>

<!-- left: discussion -->
<div class="t b" style="--x:15px;--y:444px;font-size:9.8px;color:#fff;-webkit-text-stroke:0.25px #fff">File Discussion</div>
<div class="t" style="--x:22px;--y:753px;font-size:9.25px;color:#8a8a8a">Enter a message...</div>
<div class="t" id="m1" style="--x:322px;--y:504.800px;font-size:10.8px;color:#fff">Thanks gregor this sounds really good. What reverb did you use?</div>
<div class="t" style="--x:534px;--y:524px;font-size:8.3px;color:#e2e2e2">Dec 7th at 02:04</div>
<div class="t" style="--x:604px;--y:524px;font-size:8.65px;color:#2a8ee8">Options</div>
<div class="t" id="m2" style="--x:52px;--y:555px;font-size:10.8px;color:#f6f6f6">hey thanks! obviously i couldn't invest a whole lot of time into this. i used valhalla</div>
<div class="t" id="m3" style="--x:52px;--y:571px;font-size:10.8px;letter-spacing:.15px;color:#f6f6f6">room and fabfilter pro-r.</div>
<div class="t" style="--x:49px;--y:590px;font-size:8.3px;letter-spacing:-0.22px;color:#e2e2e2">Dec 7th at 02:17</div>
<div class="t" style="--x:112px;--y:590px;font-size:8.4px;color:#e2e2e2">Gregor Beyerle</div>

<!-- right: comments -->
<div class="t b" style="--x:740px;--y:443px;font-size:8.25px;color:#fff">WAV Comments</div>
<div class="t b" style="--x:909px;--y:443px;font-size:8.25px;color:#2a7f88">File Details</div>
<div class="t" id="hint" style="--x:692px;--y:465px;font-size:8.3px;color:#e83e9b;-webkit-text-stroke:0.2px #e83e9b">Add a Waveform Comment by clicking anywhere in the waveform above.</div>
<div class="t" style="--x:695px;--y:486px;font-size:9.5px;color:#fff;-webkit-text-stroke:0.35px #fff;letter-spacing:0.05px">Comment at 3:24</div>
<div class="t meta" style="--x:708px;--y:500px">Dec 7th at 02:04 Dave Coffin</div>
<div class="t" style="--x:695.400px;--y:512px;font-size:9.6px;color:#e4e4e4">Do these breaths sound too breathy?</div>
<div class="t u" style="--x:706px;--y:530.500px;font-size:8.3px;color:#fff;letter-spacing:-0.3px">Play From Here</div>
<div class="t u" style="--x:771px;--y:530.500px;font-size:8.3px;color:#fff;letter-spacing:-0.3px">Reply</div>
<div class="t" style="--x:699px;--y:548px;font-size:8.5px;color:#4a88be">Options</div>
<div class="t meta" style="--x:724px;--y:568px;letter-spacing:-0.03px">Dec 7th at 02:05 Jon Hillman</div>
<div class="t" style="--x:711px;--y:580px;font-size:9.6px;letter-spacing:-0.05px;color:#e4e4e4">Not too bad, I'd keep 'em.</div>

<!-- caption -->
<div class="t" id="cap" style="--x:7.1px;--y:783.95px;font-size:22.8px;color:#1d1d1f;-webkit-text-stroke:0.95px #1d1d1f;letter-spacing:0.36px">Collaboration Workspaces</div>
</body>
</html>
